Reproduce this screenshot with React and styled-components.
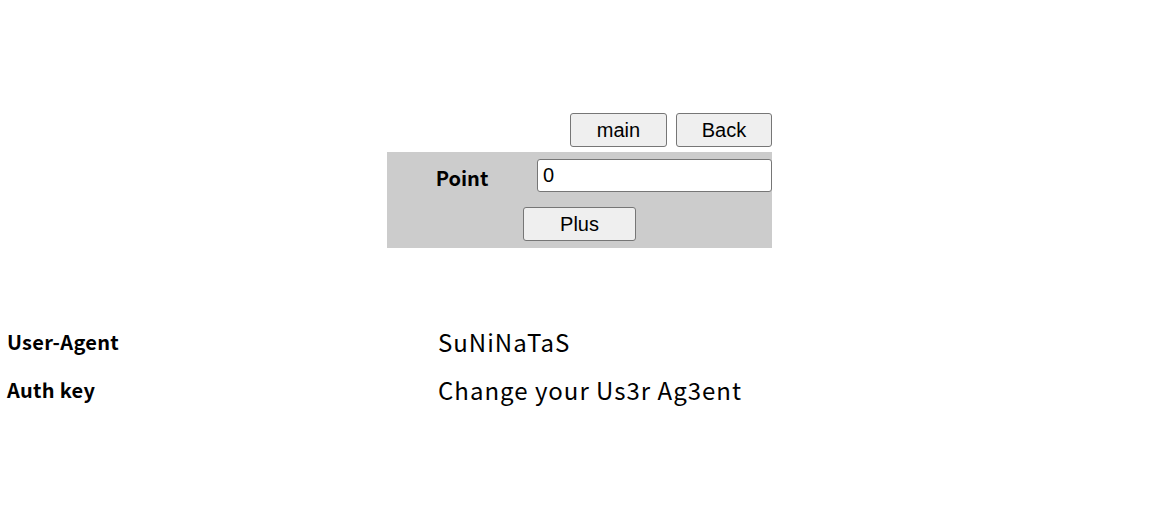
import React from "react";
import styled, { createGlobalStyle } from "styled-components";

const Global = createGlobalStyle`
  html, body { margin: 0; padding: 0; background: #fff; }
  body { font-family: "Noto Sans CJK KR", "Noto Sans", sans-serif; color: #000; }
`;

const Page = styled.div`
  width: 1154px;
  height: 508px;
  padding-top: 113px;
  box-sizing: border-box;
`;

const TopBlock = styled.div`
  margin-left: 387px;
  width: 385px;
  display: flex;
  flex-direction: column;
  gap: 5px;
`;

const ButtonRow = styled.div`
  display: flex;
  justify-content: flex-end;
  gap: 9px;
`;

const Btn = styled.button`
  box-sizing: border-box;
  width: ${(p) => p.$w}px;
  height: 34px;
  padding: 0;
  margin: 0;
  font-family: "Liberation Sans", Arial, sans-serif;
  font-size: 20px;
  color: #000;
  background: #efefef;
  border: 1px solid #767676;
  border-radius: 3px;
`;

const Panel = styled.div`
  background: #cccccc;
  height: 96px;
  box-sizing: border-box;
  padding-top: 7px;
  display: flex;
  flex-direction: column;
  gap: 15px;
`;

const FieldRow = styled.div`
  display: flex;
  align-items: flex-start;
  height: 33px;
`;

const FieldLabel = styled.div`
  width: 150px;
  height: 33px;
  box-sizing: border-box;
  padding-top: 4px;
  text-align: center;
  font-weight: 700;
  font-size: 20px;
  line-height: 29px;
`;

const Input = styled.input`
  box-sizing: border-box;
  width: 235px;
  height: 33px;
  margin: 0;
  padding: 0 5px;
  font-family: "Liberation Sans", Arial, sans-serif;
  font-size: 20px;
  color: #000;
  background: #fff;
  border: 1px solid #767676;
  border-radius: 3px;
  outline: none;
`;

const CenterRow = styled.div`
  display: flex;
  justify-content: center;
`;

const InfoTable = styled.div`
  margin-top: 77px;
  display: grid;
  grid-template-columns: 431px auto;
  row-gap: 14px;
  padding-left: 7px;
`;

const InfoLabel = styled.div`
  font-weight: 700;
  font-size: 20px;
  line-height: 34px;
  letter-spacing: 0.3px;
  display: flex;
  align-items: center;
`;

const InfoValue = styled.div`
  font-size: 24px;
  line-height: 34px;
  letter-spacing: 1px;
  display: flex;
  align-items: center;
`;

const rows = [
  ["User-Agent", "SuNiNaTaS"],
  ["Auth key", "Change your Us3r Ag3ent"],
];

export default function App() {
  return (
    <>
      <Global />
      <Page>
        <TopBlock>
          <ButtonRow>
            <Btn $w={97}>main</Btn>
            <Btn $w={96}>Back</Btn>
          </ButtonRow>
          <Panel>
            <FieldRow>
              <FieldLabel>Point</FieldLabel>
              <Input defaultValue="0" />
            </FieldRow>
            <CenterRow>
              <Btn $w={113}>Plus</Btn>
            </CenterRow>
          </Panel>
        </TopBlock>
        <InfoTable>
          {rows.map(([k, v]) => (
            <React.Fragment key={k}>
              <InfoLabel>{k}</InfoLabel>
              <InfoValue>{v}</InfoValue>
            </React.Fragment>
          ))}
        </InfoTable>
      </Page>
    </>
  );
}
